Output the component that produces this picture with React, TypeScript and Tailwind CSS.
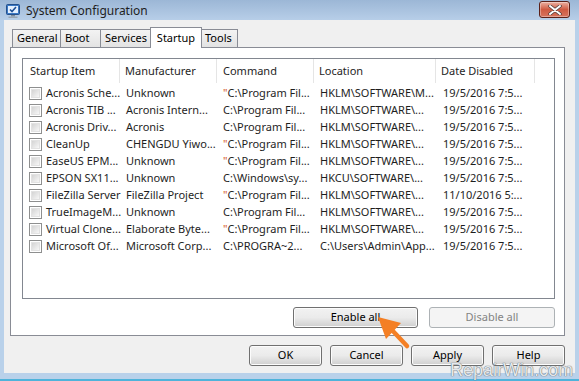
import React from 'react';

const rows = [
  ['Acronis Sche...', 'Unknown', '"C:\\Program Fil...', 'HKLM\\SOFTWARE\\M...', '19/5/2016 7:5...'],
  ['Acronis TIB ...', 'Acronis Intern...', 'C:\\Program Fil...', 'HKLM\\SOFTWARE\\...', '19/5/2016 7:5...'],
  ['Acronis Driv...', 'Acronis', 'C:\\Program Fil...', 'HKLM\\SOFTWARE\\...', '19/5/2016 7:5...'],
  ['CleanUp', 'CHENGDU Yiwo...', '"C:\\Program Fil...', 'HKLM\\SOFTWARE\\...', '19/5/2016 7:5...'],
  ['EaseUS EPM...', 'Unknown', '"C:\\Program Fil...', 'HKLM\\SOFTWARE\\...', '19/5/2016 7:5...'],
  ['EPSON SX11...', 'Unknown', 'C:\\Windows\\sy...', 'HKCU\\SOFTWARE\\...', '19/5/2016 7:5...'],
  ['FileZilla Server', 'FileZilla Project', '"C:\\Program Fil...', 'HKLM\\SOFTWARE\\...', '11/10/2016 5:...'],
  ['TrueImageM...', 'Unknown', 'C:\\Program Fil...', 'HKLM\\SOFTWARE\\...', '19/5/2016 7:5...'],
  ['Virtual Clone...', 'Elaborate Byte...', '"C:\\Program Fil...', 'HKLM\\SOFTWARE\\...', '19/5/2016 7:5...'],
  ['Microsoft Of...', 'Microsoft Corp...', 'C:\\PROGRA~2...', 'C:\\Users\\Admin\\App...', '19/5/2016 7:5...'],
];

const tabs = ['General', 'Boot', 'Services', 'Startup', 'Tools'];
const tabWidths = ['w-[49px]', 'w-[41px]', 'w-[51px]', 'w-[52px]', 'w-[38px]'];

function Checkbox() {
  return (
    <div className="w-[13px] h-[13px] border border-[#8e8f8f] bg-white p-px shrink-0">
      <div className="w-full h-full bg-gradient-to-br from-[#d4d4d4] to-[#f7f7f7] border border-[#e2e2e2]" />
    </div>
  );
}

function Button({ label, disabled, w }: { label: string; disabled?: boolean; w: string }) {
  return (
    <div
      className={
        disabled
          ? `${w} h-[21px] rounded-[3px] border border-[#adb2b5] bg-[#f4f4f4] text-[#838383] flex items-center justify-center`
          : `${w} h-[21px] rounded-[3px] border border-[#707070] bg-gradient-to-b from-[#f2f2f2] via-[#ebebeb] to-[#cfcfcf] text-black flex items-center justify-center shadow-[inset_0_0_0_1px_#fcfcfc]`
      }
    >
      {label}
    </div>
  );
}

function Command({ text }: { text: string }) {
  if (text.startsWith('"')) {
    return (
      <span>
        <span className="text-[#d2541c]">"</span>
        {text.slice(1)}
      </span>
    );
  }
  return <span>{text}</span>;
}

export default function App() {
  return (
    <div className="relative w-[579px] h-[381px] overflow-hidden flex flex-col bg-[#b9d1ea] text-[11px] text-black font-['Segoe_UI','Noto_Sans',sans-serif]">
      {/* title bar */}
      <div className="h-[20px] flex items-start bg-gradient-to-b from-[#9cb7d6] to-[#b7cee8] pl-[5px] pr-[9px]">
        <svg width="16" height="16" viewBox="0 0 16 16" className="mt-[3px]">
          <rect x="1.5" y="1.5" width="13" height="10" rx="1" fill="#3a78c4" stroke="#24508c" />
          <rect x="3" y="3" width="10" height="7" fill="#e4f0ff" />
          <path d="M5 6.5 L7 8.5 L11 4" stroke="#1d4f96" strokeWidth="1.6" fill="none" />
          <rect x="6" y="12" width="4" height="1.5" fill="#7d8a99" />
          <rect x="3.5" y="13.5" width="9" height="1.5" fill="#9aa7b5" />
        </svg>
        <span className="ml-[5px] mt-[2px] text-[12px] text-[#1e1e1e]">System Configuration</span>
        <div className="flex-1" />
        <div className="mt-px w-[31px] h-[17px] rounded-[3px] border border-[#5b2018] bg-gradient-to-b from-[#eab0a2] via-[#cf5a42] to-[#d7735d] flex items-center justify-center shadow-[inset_0_0_0_1px_rgba(255,255,255,0.35)]">
          <svg width="14" height="10" viewBox="0 0 14 10">
            <path d="M2 1 L12 9 M12 1 L2 9" stroke="#4a3a3a" strokeWidth="3.4" strokeLinecap="round" />
            <path d="M2 1 L12 9 M12 1 L2 9" stroke="#ffffff" strokeWidth="2" strokeLinecap="round" />
          </svg>
        </div>
      </div>

      {/* client area */}
      <div className="px-[4px]">
        <div className="h-[353px] bg-[#f0f0f0] pt-[7px] pl-[6px] pr-[10px] flex flex-col">
          {/* tabs */}
          <div className="flex items-end h-[21px] -mb-px relative z-10 pl-[2px]">
            {tabs.map((t, i) =>
              t === 'Startup' ? (
                <div
                  key={t}
                  className={`${tabWidths[i]} h-[21px] -mx-px bg-white border border-b-0 border-[#898c95] flex items-start justify-center pt-[2px] relative z-10`}
                >
                  {t}
                </div>
              ) : (
                <div
                  key={t}
                  className={`${tabWidths[i]} h-[18px] mb-px bg-gradient-to-b from-[#f3f3f3] to-[#e3e3e3] border border-b-0 border-[#898c95] flex items-center px-[4px] ${i > 0 ? '-ml-px' : ''}`}
                >
                  {t}
                </div>
              )
            )}
          </div>

          {/* tab panel */}
          <div className="h-[289px] border border-[#898c95] bg-white pt-[10px] pl-[11px] flex flex-col">
            <div className="w-[533px] h-[241px] border border-[#828790] bg-white">
              <div className="h-[24px] flex text-[#1e1e1e]">
                <div className="w-[97px] pl-[7px] flex items-center border-r border-[#e5e5e5]">Startup Item</div>
                <div className="w-[97px] pl-[5px] flex items-center border-r border-[#e5e5e5]">Manufacturer</div>
                <div className="w-[97px] pl-[6px] flex items-center border-r border-[#e5e5e5]">Command</div>
                <div className="w-[122px] pl-[5px] flex items-center border-r border-[#e5e5e5]">Location</div>
                <div className="w-[99px] pl-[5px] flex items-center border-r border-[#e5e5e5]">Date Disabled</div>
                <div className="flex-1" />
              </div>
              <div className="pt-[2px]">
                {rows.map((r, i) => (
                  <div key={i} className="h-[17px] flex items-center text-[#1e1e1e]">
                    <div className="w-[97px] flex items-center pl-[6px] gap-[4px] whitespace-nowrap">
                      <Checkbox />
                      <span>{r[0]}</span>
                    </div>
                    <div className="w-[97px] pl-[6px] whitespace-nowrap">{r[1]}</div>
                    <div className="w-[97px] pl-[6px] whitespace-nowrap">
                      <Command text={r[2]} />
                    </div>
                    <div className="w-[122px] pl-[6px] whitespace-nowrap">{r[3]}</div>
                    <div className="w-[99px] pl-[7px] whitespace-nowrap">{r[4]}</div>
                  </div>
                ))}
              </div>
            </div>
            <div className="w-[533px] flex justify-end gap-[11px] mt-[8px]">
              <Button label="Enable all" w="w-[125px]" />
              <Button label="Disable all" w="w-[126px]" disabled />
            </div>
          </div>

          {/* dialog buttons */}
          <div className="flex justify-end gap-[8px] mt-[9px]">
            <Button label="OK" w="w-[73px]" />
            <Button label="Cancel" w="w-[73px]" />
            <Button label="Apply" w="w-[73px]" />
            <Button label="Help" w="w-[73px]" />
          </div>
        </div>
      </div>

      {/* bottom frame */}
      <div className="flex-1 flex flex-col justify-end">
        <div className="h-[2px] bg-[#4fb3da]" />
      </div>

      {/* annotation arrow */}
      <svg className="absolute left-0 top-0 pointer-events-none" width="579" height="381">
        <path d="M407 346 L391 329" stroke="#f47f24" strokeWidth="4.5" strokeLinecap="round" />
        <polygon points="378,317 401,323 386,339" fill="#f47f24" />
      </svg>

      {/* watermark */}
      <div className="absolute right-[6px] bottom-[2px] text-[18px] leading-none text-[#e4e8ec] font-['Liberation_Sans',sans-serif] [text-shadow:0_0_1px_#5f6872,0_0_1px_#5f6872]">
        RepairWin.com
      </div>
    </div>
  );
}
